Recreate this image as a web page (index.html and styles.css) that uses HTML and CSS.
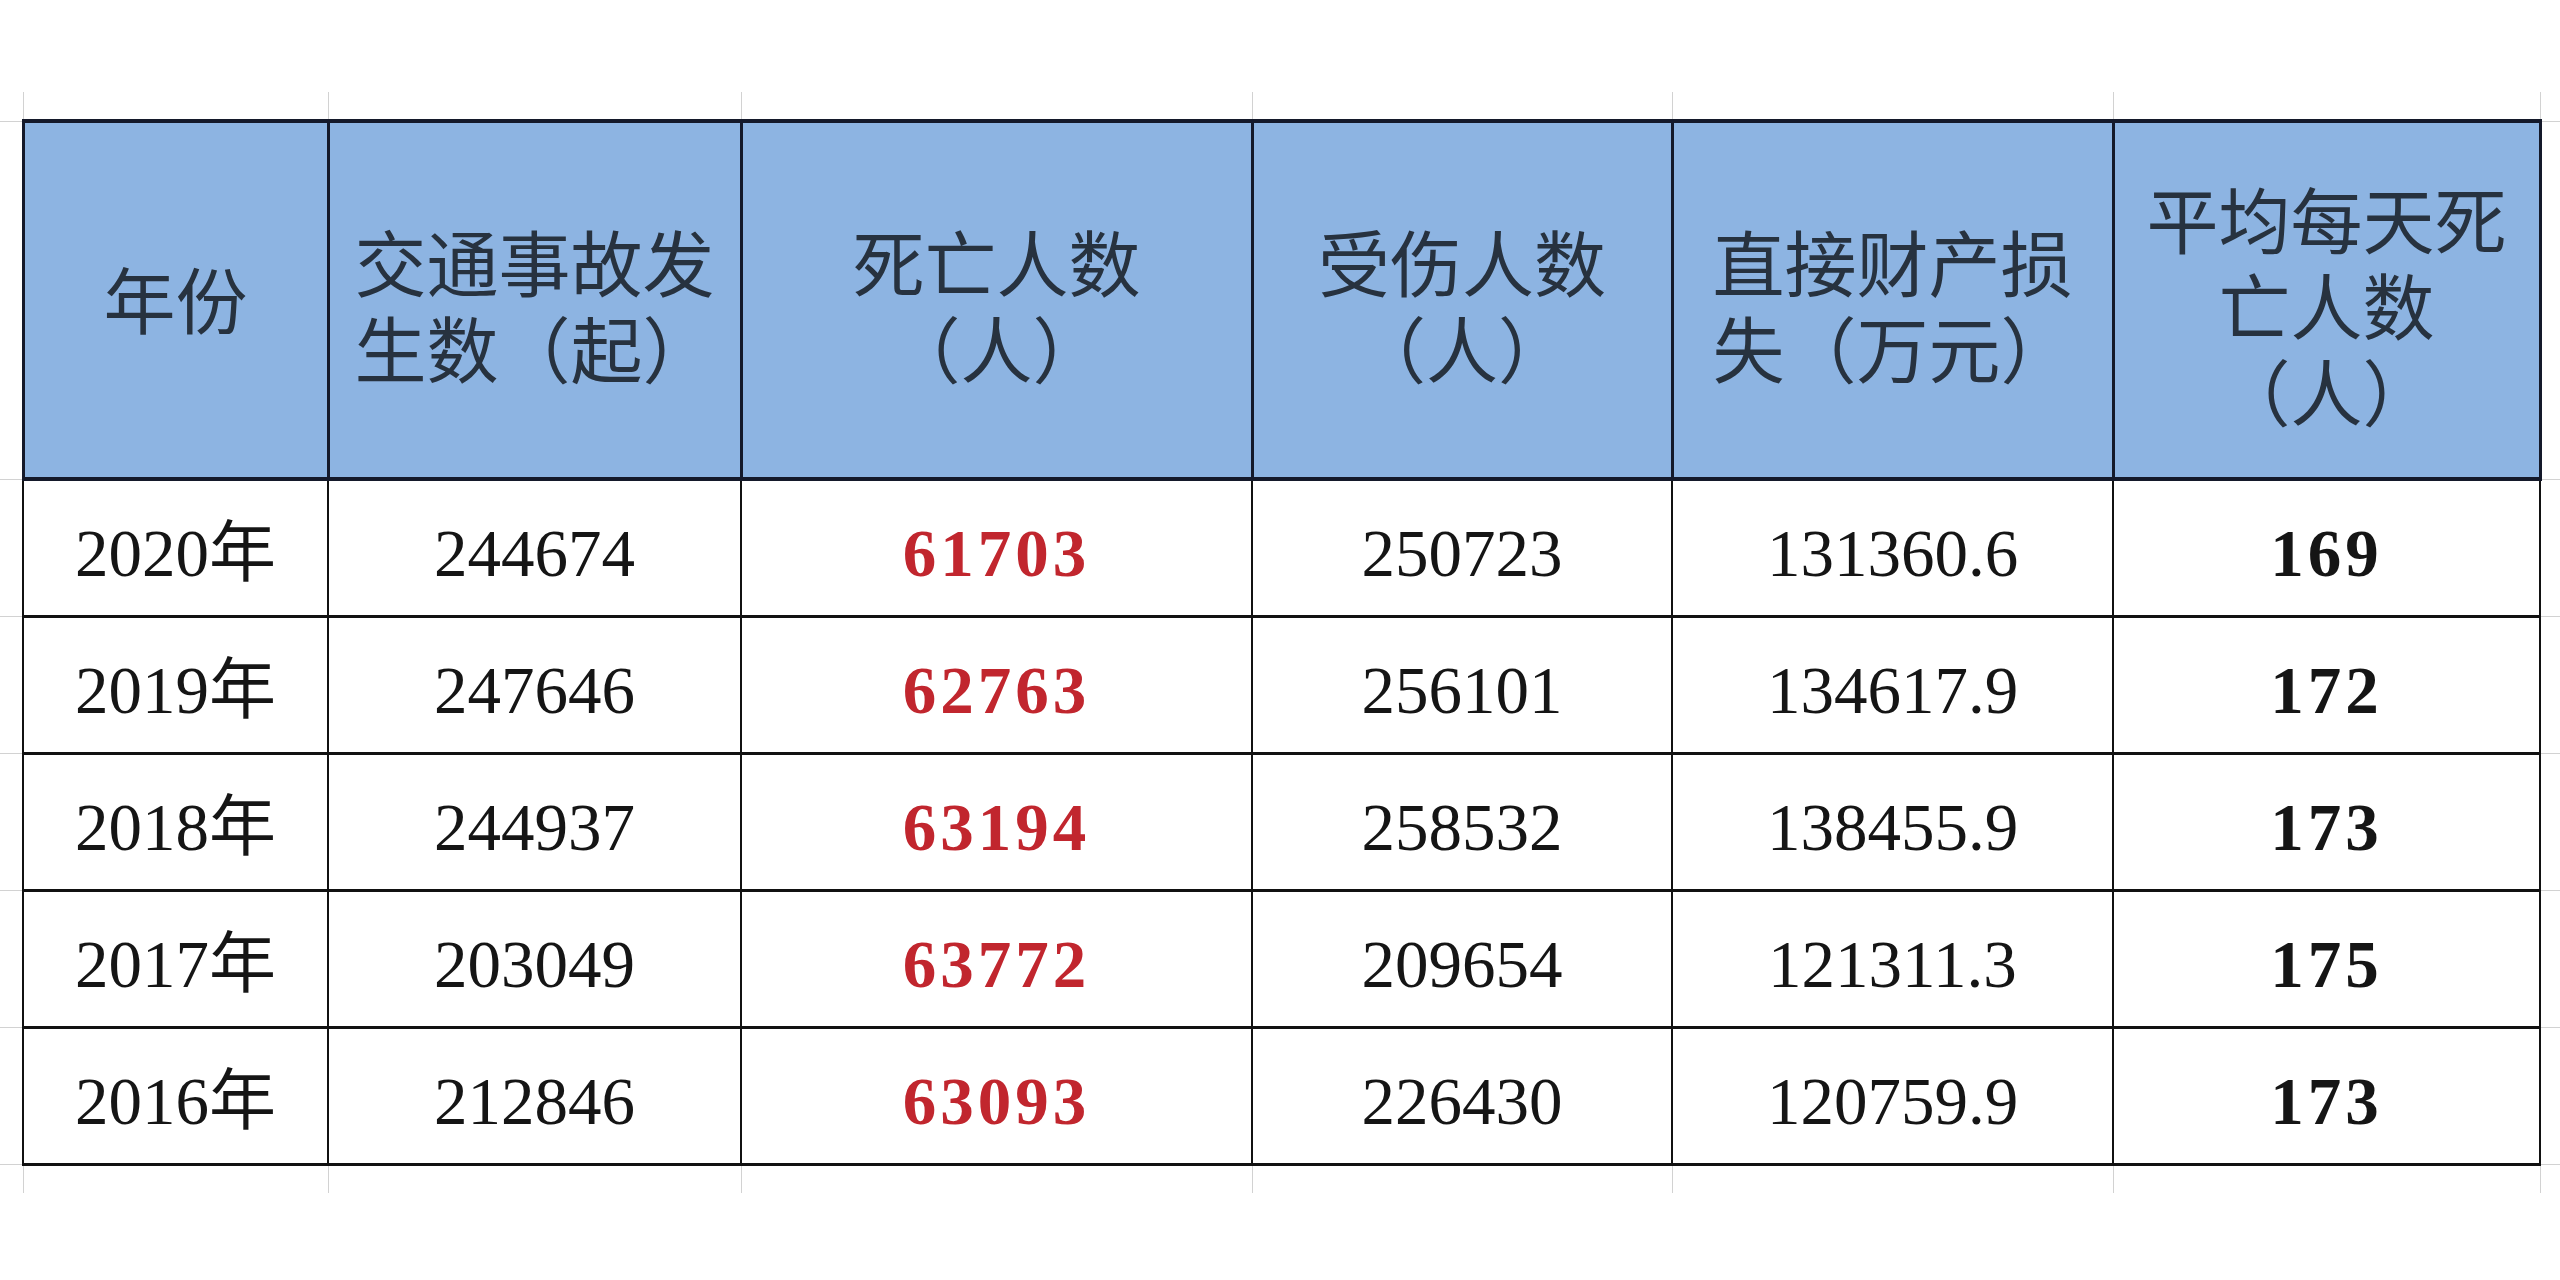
FILE: index.html
```html
<!DOCTYPE html>
<html lang="zh-CN">
<head>
<meta charset="utf-8">
<title>交通事故统计</title>
<link rel="stylesheet" href="styles.css">
</head>
<body>
<table class="sheet">
  <colgroup>
    <col class="w-gl"><col class="w-c1"><col class="w-c2"><col class="w-c3"><col class="w-c4"><col class="w-c5"><col class="w-c6"><col class="w-gr">
  </colgroup>
  <tr class="ghost-top">
    <td class="gl"></td><td></td><td></td><td></td><td></td><td></td><td></td><td class="gr"></td>
  </tr>
  <tr class="head">
    <td class="gl"></td>
    <th class="h-year">年份</th>
    <th>交通事故发<br>生数（起）</th>
    <th>死亡人数<br>（人）</th>
    <th>受伤人数<br>（人）</th>
    <th>直接财产损<br>失（万元）</th>
    <th>平均每天死<br>亡人数<br>（人）</th>
    <td class="gr"></td>
  </tr>
  <tr class="row">
    <td class="gl"></td><td>2020年</td><td>244674</td><td class="red">61703</td><td>250723</td><td>131360.6</td><td class="bold">169</td><td class="gr"></td>
  </tr>
  <tr class="row">
    <td class="gl"></td><td>2019年</td><td>247646</td><td class="red">62763</td><td>256101</td><td>134617.9</td><td class="bold">172</td><td class="gr"></td>
  </tr>
  <tr class="row">
    <td class="gl"></td><td>2018年</td><td>244937</td><td class="red">63194</td><td>258532</td><td>138455.9</td><td class="bold">173</td><td class="gr"></td>
  </tr>
  <tr class="row">
    <td class="gl"></td><td>2017年</td><td>203049</td><td class="red">63772</td><td>209654</td><td>121311.3</td><td class="bold">175</td><td class="gr"></td>
  </tr>
  <tr class="row">
    <td class="gl"></td><td>2016年</td><td>212846</td><td class="red">63093</td><td>226430</td><td>120759.9</td><td class="bold">173</td><td class="gr"></td>
  </tr>
  <tr class="ghost-bot">
    <td class="gl"></td><td></td><td></td><td></td><td></td><td></td><td></td><td class="gr"></td>
  </tr>
</table>
</body>
</html>
```

FILE: styles.css
```css
html, body {
  margin: 0;
  padding: 0;
  background: #ffffff;
}

body {
  width: 2560px;
  height: 1280px;
  overflow: hidden;
}

.sheet {
  margin-top: 92px;
  width: 2560px;
  table-layout: fixed;
  border-collapse: collapse;
  border-spacing: 0;
}

.w-gl { width: 23px; }
.w-c1 { width: 305px; }
.w-c2 { width: 413px; }
.w-c3 { width: 511px; }
.w-c4 { width: 420px; }
.w-c5 { width: 441px; }
.w-c6 { width: 427px; }
.w-gr { width: 20px; }

.sheet td,
.sheet th {
  padding: 0;
  text-align: center;
  vertical-align: middle;
  white-space: nowrap;
}

/* faint spreadsheet gridlines outside the table */
.ghost-top td,
.ghost-bot td {
  height: 27px;
  border-left: 1px solid #d2d2d2;
  border-right: 1px solid #d2d2d2;
}

.ghost-top td.gl,
.ghost-bot td.gl {
  border-left: none;
}

.ghost-top td.gr,
.ghost-bot td.gr {
  border-right: none;
}

.sheet td.gl,
.sheet td.gr {
  border-top: 1px solid #d2d2d2;
  border-bottom: 1px solid #d2d2d2;
}

.ghost-top td.gl,
.ghost-top td.gr {
  border-top: none;
}

.ghost-bot td.gl,
.ghost-bot td.gr {
  border-bottom: none;
}

/* header */
.head th {
  height: 348px;
  background: #8db4e2;
  color: #27323f;
  font-family: "Noto Sans CJK SC", "Noto Sans", sans-serif;
  font-weight: 400;
  font-size: 72px;
  line-height: 86px;
  padding-top: 6px;
  border-top: 4px solid #14192a;
  border-bottom: 4px solid #14192a;
  border-left: 3px solid #14192a;
  border-right: 3px solid #14192a;
}

.head th.h-year {
  padding-top: 0;
  padding-bottom: 6px;
}

/* data rows */
.row td {
  height: 124px;
  color: #151515;
  font-family: "Liberation Serif", "Noto Sans CJK SC", serif;
  font-size: 67px;
  line-height: 1;
  padding-top: 10px;
  border: 2px solid #111111;
  border-top-width: 3px;
  border-bottom-width: 3px;
}

.row td.gl,
.row td.gr {
  border-left: none;
  border-right: none;
  border-top: 1px solid #d2d2d2;
  border-bottom: 1px solid #d2d2d2;
  padding: 0;
}

.row td.red {
  color: #c1262e;
  font-weight: 700;
  letter-spacing: 4px;
}

.row td.bold {
  font-weight: 700;
  letter-spacing: 4px;
}
```
